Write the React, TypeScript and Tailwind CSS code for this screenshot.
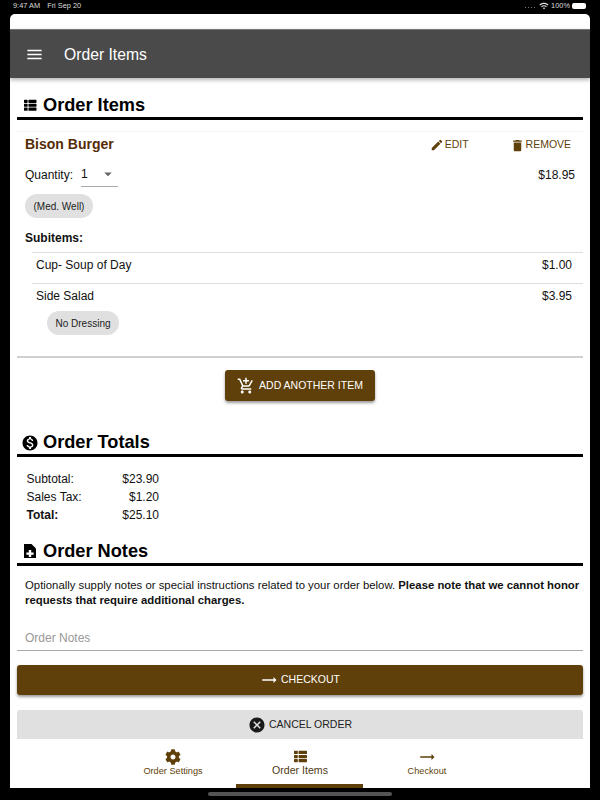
import { ReactNode } from "react";
import {
  MdMenu,
  MdEdit,
  MdDelete,
  MdArrowDropDown,
  MdOutlineAddShoppingCart,
  MdMonetizationOn,
  MdCancel,
  MdWifi,
  MdTrendingFlat,
} from "react-icons/md";
import { FaCog, FaThList } from "react-icons/fa";

const SectionTitle = ({ icon, title }: { icon: ReactNode; title: string }) => (
  <div className="flex items-center h-[29px] border-b-[3px] border-black pl-[5px] pt-[3px] text-[18.2px] font-bold text-black">
    <span className="w-[21px] flex items-center">{icon}</span>
    {title}
  </div>
);

const Chip = ({ label }: { label: string }) => (
  <span className="inline-flex items-center h-[24px] px-[8.5px] rounded-full bg-[#e0e0e0] text-[10px] text-[#222]">
    {label}
  </span>
);

const NavItem = ({ icon, label, active }: { icon: ReactNode; label: string; active?: boolean }) => (
  <div className="relative w-[127px] h-full flex flex-col items-center pt-[9px] text-[#5f3f0a]">
    <div className={active ? "h-[18px] flex items-center -mt-[1px]" : "h-[18px] flex items-center"}>{icon}</div>
    <span className={active ? "text-[10.6px] -mt-[2px] text-[#4f3a14]" : "text-[9.2px] -mt-[1px]"}>{label}</span>
    {active && <div className="absolute bottom-0 -left-[1px] right-[1px] h-[4px] bg-[#5f3f0a]" />}
  </div>
);

export default function App() {
  return (
    <div className="w-[600px] h-[800px] bg-black flex flex-col overflow-hidden font-['Liberation_Sans',Arial,sans-serif] text-[#111]">
      <div className="h-[14px] shrink-0 flex items-center justify-between pl-[13px] pr-[14px] pb-[2px] text-[7.4px] text-[#ddd]">
        <div className="flex gap-[7px]">
          <span>9:47 AM</span>
          <span>Fri Sep 20</span>
        </div>
        <div className="flex items-center gap-[2px]">
          <span className="flex gap-[2px] mr-[2px] mt-[3px]">
            <span className="w-[1px] h-[1px] bg-[#777]" />
            <span className="w-[1px] h-[1px] bg-[#777]" />
            <span className="w-[1px] h-[1px] bg-[#777]" />
            <span className="w-[1px] h-[1px] bg-[#777]" />
          </span>
          <MdWifi className="text-[10px]" />
          <span>100%</span>
          <span className="w-[14px] h-[6px] bg-white rounded-[2px]" />
        </div>
      </div>

      <div className="mx-[10px] h-[774px] shrink-0 bg-white rounded-t-[5px] flex flex-col overflow-hidden">
        <div className="h-[15px] shrink-0" />
        <header className="h-[49px] shrink-0 bg-[#4a4a4a] flex items-center pl-[15px] pt-[1px] text-white text-[15.7px] shadow-[0_2px_4px_rgba(0,0,0,0.3)] border-t border-[#777]">
          <MdMenu className="text-[19px] mr-[20px]" />
          <span>Order Items</span>
        </header>

        <main className="flex-1 overflow-hidden px-[7px] pt-[13px]">
          <SectionTitle icon={<FaThList className="text-[12.5px] ml-[2px]" />} title="Order Items" />

          <div className="mt-[11px] border-t border-[#f3f3f3] border-b-2 border-b-[#d0d0d0] h-[227px] pl-[8px]">
            <div className="flex items-center h-[26px]">
              <span className="text-[14px] font-bold text-[#552c05] -mt-[2px]">Bison Burger</span>
              <span className="flex items-center gap-[1px] text-[10.5px] text-[#5f3f0a] ml-[316px]">
                <MdEdit className="text-[14px]" />
                EDIT
              </span>
              <span className="flex items-center gap-[1px] text-[10.5px] text-[#5f3f0a] ml-[41px]">
                <MdDelete className="text-[15px]" />
                REMOVE
              </span>
            </div>

            <div className="flex items-center justify-between h-[31px] mt-[1px] text-[12px] pr-[8px]">
              <div className="flex items-center">
                <span>Quantity:</span>
                <span className="ml-[8px] w-[37px] h-[24px] border-b border-[#aaa] flex items-center justify-between">
                  1
                  <MdArrowDropDown className="text-[18px] text-[#666] mr-[1px]" />
                </span>
              </div>
              <span>$18.95</span>
            </div>

            <div className="mt-[4px] flex">
              <Chip label="(Med. Well)" />
            </div>

            <div className="mt-[11px] text-[12px] font-bold">Subitems:</div>

            <div className="ml-[7px] mt-[5px] border-t border-[#ddd] h-[31px] flex justify-between pt-[3px] pl-[4px] pr-[11px] text-[12px]">
              <span>Cup- Soup of Day</span>
              <span>$1.00</span>
            </div>
            <div className="ml-[7px] border-t border-[#ddd] pt-[3px] pl-[4px] pr-[11px] text-[12px]">
              <div className="flex justify-between">
                <span>Side Salad</span>
                <span>$3.95</span>
              </div>
              <div className="mt-[6px] ml-[11px] flex">
                <Chip label="No Dressing" />
              </div>
            </div>
          </div>

          <div className="flex justify-center mt-[12px]">
            <button className="h-[31px] w-[150px] rounded-[3px] bg-[#5f3f0a] text-white text-[10.5px] flex items-center justify-center gap-[4px] shadow-[0_2px_3px_rgba(0,0,0,0.4)]">
              <MdOutlineAddShoppingCart className="text-[18px]" />
              ADD ANOTHER ITEM
            </button>
          </div>

          <div className="mt-[27px]">
            <SectionTitle icon={<MdMonetizationOn className="text-[18px] -ml-[1px]" />} title="Order Totals" />
          </div>

          <div className="mt-[13px] ml-[9.5px] w-[132.5px] text-[12px] leading-[18px]">
            <div className="flex justify-between">
              <span>Subtotal:</span>
              <span>$23.90</span>
            </div>
            <div className="flex justify-between">
              <span>Sales Tax:</span>
              <span>$1.20</span>
            </div>
            <div className="flex justify-between">
              <span className="font-bold">Total:</span>
              <span>$25.10</span>
            </div>
          </div>

          <div className="mt-[13px]">
            <SectionTitle
              icon={
                <svg width="12" height="14" viewBox="0 0 12 14" className="ml-[2px] -mt-[2px]">
                  <path d="M0 0h7.5L12 4.5V14H0z" fill="#000" />
                  <path d="M4.8 6h2.4v2.4h2.4v2.4H7.2v2.2H4.8v-2.2H2.4V8.4h2.4z" fill="#fff" />
                </svg>
              }
              title="Order Notes"
            />
          </div>

          <p className="mt-[12px] pl-[8px] text-[11.35px] leading-[15px] text-[#111]">
            Optionally supply notes or special instructions related to your order below.{" "}
            <b>Please note that we cannot honor requests that require additional charges.</b>
          </p>

          <div className="mt-[18px] h-[25px] border-b border-[#aaa] pl-[8px] text-[12px] text-[#999] flex items-center">
            Order Notes
          </div>

          <button className="mt-[14px] w-full h-[30px] rounded-[3px] bg-[#5f3f0a] text-white text-[10.5px] flex items-center justify-center gap-[3px] shadow-[0_2px_3px_rgba(0,0,0,0.4)]">
            <MdTrendingFlat className="text-[18px]" />
            CHECKOUT
          </button>

          <button className="mt-[15px] w-full h-[30px] rounded-t-[3px] bg-[#e0e0e0] text-[#222] text-[10.5px] flex items-center justify-center gap-[3px]">
            <MdCancel className="text-[18px] text-[#1a1a1a]" />
            CANCEL ORDER
          </button>
        </main>

        <nav className="h-[49px] shrink-0 bg-white flex justify-center">
          <NavItem icon={<FaCog className="text-[16px]" />} label="Order Settings" />
          <NavItem icon={<FaThList className="text-[13px]" />} label="Order Items" active />
          <NavItem icon={<MdTrendingFlat className="text-[18px]" />} label="Checkout" />
        </nav>
      </div>

      <div className="h-[12px] shrink-0 flex items-center justify-center">
        <div className="w-[184px] h-[4px] rounded-full bg-[#555]" />
      </div>
    </div>
  );
}
